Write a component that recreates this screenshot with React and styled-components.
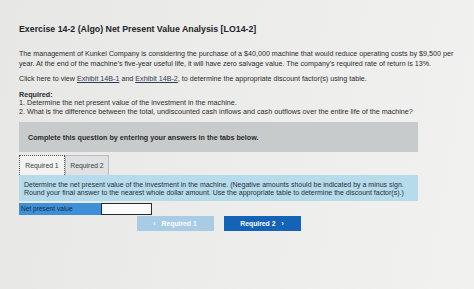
import styled, { createGlobalStyle } from "styled-components";

const GlobalStyle = createGlobalStyle`
  html, body {
    margin: 0;
    padding: 0;
    background: #ebecea;
  }
  body {
    width: 474px;
    height: 289px;
    overflow: hidden;
    font-family: "Liberation Sans", Arial, sans-serif;
    color: #2a2b2d;
  }
`;

const Page = styled.div`
  padding: 24px 8px 0 19px;
  width: 474px;
  height: 289px;
  box-sizing: border-box;
  background: linear-gradient(100deg, #e7e8e6 0%, #edeeec 55%, #f1f1ef 100%);
`;

const Title = styled.h1`
  margin: 0 0 14px;
  font-size: 8.8px;
  font-weight: 700;
  line-height: 11px;
  color: #222326;
`;

const Para = styled.p`
  margin: 0 0 5px;
  font-size: 7.15px;
  line-height: 10px;
`;

const ExhibitLink = styled.span`
  text-decoration: underline;
  color: #2f3a52;
`;

const RequiredHead = styled.div`
  font-size: 7.2px;
  font-weight: 700;
  line-height: 9px;
  margin-top: 6px;
`;

const List = styled.ol`
  margin: 0;
  padding: 0;
  list-style: none;
  font-size: 7.2px;
  line-height: 8.5px;
`;

const Panel = styled.div`
  width: 399px;
  margin-top: 6px;
`;

const Banner = styled.div`
  background: #c8cbcc;
  height: 30px;
  padding-left: 9px;
  display: flex;
  align-items: center;
  font-size: 7.2px;
  font-weight: 700;
`;

const Tabs = styled.div`
  display: flex;
  margin-top: 3px;
`;

const Tab = styled.div`
  width: ${(p) => p.$w}px;
  height: 20px;
  box-sizing: border-box;
  display: flex;
  align-items: center;
  justify-content: center;
  font-size: 6.8px;
  color: #3a3c40;
  background: ${(p) => (p.$active ? "#f2f3f1" : "#dfe1e2")};
  border: 1px ${(p) => (p.$active ? "dotted #555" : "solid #b9bcbe")};
  border-bottom: none;
`;

const InfoBox = styled.div`
  background: #b6dbea;
  padding: 6px 5px 5px 5px;
  font-size: 7px;
  line-height: 7.5px;
  color: #26303a;
  white-space: nowrap;
`;

const InputRow = styled.div`
  display: flex;
  margin-top: 2px;
  height: 12px;
`;

const Label = styled.div`
  width: 82px;
  background: #3d8fd8;
  font-size: 6.6px;
  line-height: 12px;
  padding-left: 2px;
  box-sizing: border-box;
  color: #1b2a45;
`;

const Input = styled.div`
  width: 51px;
  background: #fbfbfb;
  border: 1px solid #2b2b2b;
  box-sizing: border-box;
`;

const Buttons = styled.div`
  display: flex;
  justify-content: center;
  gap: 10px;
  margin-top: 1px;
`;

const NavButton = styled.div`
  width: 77px;
  height: 15px;
  display: flex;
  align-items: center;
  justify-content: center;
  gap: 6px;
  font-size: 6.8px;
  font-weight: 700;
  color: #fff;
  background: ${(p) => (p.$primary ? "#1463b6" : "#a8cbe6")};
`;

export default function App() {
  return (
    <>
      <GlobalStyle />
      <Page>
        <Title>Exercise 14-2 (Algo) Net Present Value Analysis [LO14-2]</Title>
        <Para>
          The management of Kunkel Company is considering the purchase of a $40,000 machine that would reduce operating costs by $9,500
          per year. At the end of the machine’s five-year useful life, it will have zero salvage value. The company’s required rate of return is 13%.
        </Para>
        <Para>
          Click here to view <ExhibitLink>Exhibit 14B-1</ExhibitLink> and <ExhibitLink>Exhibit 14B-2</ExhibitLink>, to determine the appropriate discount factor(s) using table.
        </Para>
        <RequiredHead>Required:</RequiredHead>
        <List>
          <li>1. Determine the net present value of the investment in the machine.</li>
          <li>2. What is the difference between the total, undiscounted cash inflows and cash outflows over the entire life of the machine?</li>
        </List>
        <Panel>
          <Banner>Complete this question by entering your answers in the tabs below.</Banner>
          <Tabs>
            <Tab $w={46} $active>Required 1</Tab>
            <Tab $w={44}>Required 2</Tab>
          </Tabs>
          <InfoBox>
            Determine the net present value of the investment in the machine. (Negative amounts should be indicated by a minus sign.
            <br />
            Round your final answer to the nearest whole dollar amount. Use the appropriate table to determine the discount factor(s).)
          </InfoBox>
          <InputRow>
            <Label>Net present value</Label>
            <Input />
          </InputRow>
          <Buttons>
            <NavButton>
              <span>‹</span>
              <span>Required 1</span>
            </NavButton>
            <NavButton $primary>
              <span>Required 2</span>
              <span>›</span>
            </NavButton>
          </Buttons>
        </Panel>
      </Page>
    </>
  );
}
